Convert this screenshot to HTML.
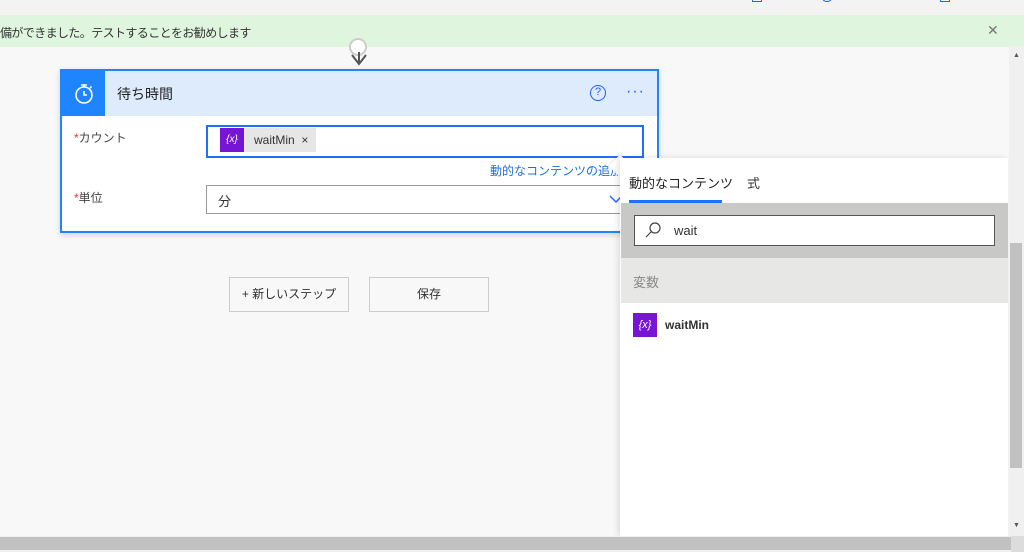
<!DOCTYPE html><html><head><meta charset="utf-8"><style>
*{box-sizing:border-box;margin:0;padding:0}
body{width:1024px;height:552px;overflow:hidden;background:#f8f8f8;font-family:"Liberation Sans","Noto Sans CJK JP",sans-serif;color:#323130;position:relative;font-size:13px}
.a{position:absolute}
</style></head><body>
<div class="a" style="left:0;top:0;width:1024px;height:15px;background:#f3f3f3"></div>
<div class="a" style="left:752px;top:-6px;width:10px;height:8px;border:1.5px solid #2266ee"></div>
<div class="a" style="left:822px;top:-6px;width:10px;height:8px;border:1.5px solid #2266ee;border-radius:50%"></div>
<div class="a" style="left:940px;top:-6px;width:10px;height:8px;border:1.5px solid #2266ee"></div>
<div class="a" style="left:0;top:15px;width:1024px;height:32px;background:#dff5dd"></div>
<div class="a" style="left:0;top:24px;font-size:12px;color:#333;letter-spacing:-0.6px">備ができました。テストすることをお勧めします</div>
<div class="a" style="left:987px;top:22px;font-size:14px;color:#777">✕</div>
<div class="a" style="left:349px;top:38px;width:18px;height:18px;border:2px solid #ccc;border-radius:50%;background:#fff"></div>
<svg class="a" style="left:348px;top:52px" width="22" height="16"><path d="M4 3 L11 12 L18 3 M11 0 V12" stroke="#555" stroke-width="2" fill="none"/></svg>
<div class="a" style="left:60px;top:69px;width:599px;height:164px;border:2px solid #1f85ff;background:#fff;box-shadow:0 2px 6px rgba(0,0,0,.15)">
<div class="a" style="left:0;top:0;width:595px;height:45px;background:#ddebfd"></div>
<div class="a" style="left:0;top:0;width:43px;height:45px;background:#1f85ff"></div>
<svg class="a" style="left:10px;top:11px" width="24" height="24"><circle cx="12" cy="13" r="8" stroke="#fff" stroke-width="1.6" fill="none"/><path d="M12 9v4h3M9 3h6M12 3v2M18 6l1.5-1.5" stroke="#fff" stroke-width="1.6" fill="none"/></svg>
<div class="a" style="left:55px;top:13px;font-size:14px;color:#222">待ち時間</div>
<div class="a" style="left:528px;top:14px;width:16px;height:16px;border:1.5px solid #1f5fff;border-radius:50%;font-size:11px;color:#1f5fff;text-align:center;line-height:13px">?</div>
<div class="a" style="left:564px;top:12px;font-size:16px;color:#1f5fff;letter-spacing:1px">···</div>
<div class="a" style="left:12px;top:58px;font-size:12px;color:#444"><span style="color:#e33">*</span>カウント</div>
<div class="a" style="left:144px;top:54px;width:438px;height:33px;border:2px solid #1f6fff"></div>
<div class="a" style="left:158px;top:57px;width:96px;height:24px;background:#e6e6e6"></div>
<div class="a" style="left:158px;top:57px;width:24px;height:24px;background:#7715d4;color:#fff;font-size:10px;text-align:center;line-height:24px;font-style:italic">{x}</div>
<div class="a" style="left:192px;top:62px;font-size:12px;color:#333">waitMin&nbsp; ×</div>
<div class="a" style="left:428px;top:91px;font-size:12px;color:#1f6fd8">動的なコンテンツの追加</div>
<div class="a" style="left:12px;top:118px;font-size:12px;color:#444"><span style="color:#e33">*</span>単位</div>
<div class="a" style="left:144px;top:114px;width:440px;height:29px;border:1px solid #999;background:#fff"></div>
<div class="a" style="left:156px;top:120px;font-size:13px">分</div>
<svg class="a" style="left:546px;top:122px" width="16" height="12"><path d="M2 3l6 6 6-6" stroke="#1f6fff" stroke-width="1.5" fill="none"/></svg>
</div>
<div class="a" style="left:229px;top:277px;width:120px;height:35px;border:1px solid #ccc;background:#f8f8f8;text-align:center;line-height:33px;font-size:12px">+ 新しいステップ</div>
<div class="a" style="left:369px;top:277px;width:120px;height:35px;border:1px solid #ccc;background:#f8f8f8;text-align:center;line-height:33px;font-size:12px">保存</div>
<div class="a" style="left:612px;top:158px;width:16px;height:16px;background:#fff;transform:rotate(45deg);box-shadow:-1px -1px 2px rgba(0,0,0,.1)"></div>
<div class="a" style="left:620px;top:158px;width:388px;height:378px;background:#fff;box-shadow:-2px 0 6px rgba(0,0,0,.12)">
<div class="a" style="left:9px;top:15px;font-size:13px;color:#222">動的なコンテンツ</div>
<div class="a" style="left:127px;top:15px;font-size:13px;color:#333">式</div>
<div class="a" style="left:9px;top:42px;width:93px;height:3px;background:#1f6fff"></div>
<div class="a" style="left:1px;top:45px;width:387px;height:55px;background:#c8c9c6"></div>
<div class="a" style="left:14px;top:57px;width:361px;height:31px;border:1px solid #555;background:#fff"></div>
<svg class="a" style="left:24px;top:63px" width="18" height="18"><circle cx="11" cy="7" r="5" stroke="#444" stroke-width="1.2" fill="none"/><path d="M7.5 10.5L2 16" stroke="#444" stroke-width="1.2"/></svg>
<div class="a" style="left:54px;top:65px;font-size:13px;color:#333">wait</div>
<div class="a" style="left:1px;top:100px;width:387px;height:45px;background:#e7e8e5"></div>
<div class="a" style="left:13px;top:114px;font-size:13px;color:#888">変数</div>
<div class="a" style="left:13px;top:155px;width:24px;height:24px;background:#7715d4;color:#fff;font-size:11px;text-align:center;line-height:24px;font-style:italic">{x}</div>
<div class="a" style="left:45px;top:160px;font-size:12px;font-weight:bold;color:#333">waitMin</div>
</div>
<div class="a" style="left:1009px;top:46px;width:15px;height:490px;background:#f0f0f0"></div>
<div class="a" style="left:1010px;top:243px;width:12px;height:225px;background:#c1c1c1"></div>
<div class="a" style="left:1013px;top:52px;font-size:7px;color:#555">▲</div>
<div class="a" style="left:1013px;top:522px;font-size:7px;color:#555">▼</div>
<div class="a" style="left:0;top:536px;width:1024px;height:16px;background:#f0f0f0"></div>
<div class="a" style="left:0;top:537px;width:1011px;height:13px;background:#c1c1c1"></div>
<div class="a" style="left:1011px;top:536px;width:13px;height:16px;background:#dcdcdc"></div>
</body></html>
